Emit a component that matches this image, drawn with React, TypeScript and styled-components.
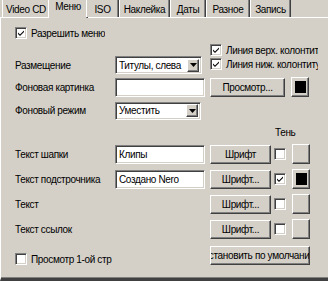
import React from 'react';
import styled, { createGlobalStyle } from 'styled-components';

const face = '#d4d0c8';
const shadow = '#808080';
const dark = '#404040';

const GlobalStyle = createGlobalStyle`
  body {
    margin: 0;
    background: ${face};
  }
`;

const Dialog = styled.div`
  width: 328px;
  height: 281px;
  background: ${face};
  overflow: hidden;
  display: flex;
  flex-direction: column;
  font-family: 'Liberation Sans', Arial, sans-serif;
  font-size: 10px;
  letter-spacing: -0.35px;
  color: #000;
`;

const TabStrip = styled.div`
  display: flex;
  height: 17px;
  padding-left: 2px;
  position: relative;
  z-index: 1;
`;

const Tab = styled.div<{ $w: number; $active?: boolean }>`
  box-sizing: border-box;
  width: ${p => p.$w}px;
  height: ${p => (p.$active ? 18 : 17)}px;
  margin: 0 ${p => (p.$active ? -2 : 0)}px;
  padding-top: ${p => (p.$active ? 1 : 4)}px;
  background: ${face};
  border-left: 1px solid #fff;
  border-right: 1px solid ${dark};
  box-shadow: inset -1px 0 ${shadow};
  text-align: center;
  white-space: nowrap;
  overflow: hidden;
  line-height: 12px;
`;

const Panel = styled.div`
  flex: 1;
  border-top: 1px solid #fff;
  border-left: 1px solid #fff;
  border-bottom: 3px solid ${dark};
  box-shadow: inset 0 -1px ${shadow};
  padding-left: 14px;
  display: flex;
  flex-direction: column;
`;

const Row = styled.div<{ $top: number; $h: number; $align?: string }>`
  display: flex;
  align-items: ${p => p.$align || 'center'};
  margin-top: ${p => p.$top}px;
  height: ${p => p.$h}px;
  flex-shrink: 0;
`;

const Label = styled.div`
  width: 100px;
  flex-shrink: 0;
  white-space: nowrap;
  line-height: 17px;
`;

const Sunken = styled.div`
  box-sizing: border-box;
  background: #fff;
  border-top: 1px solid ${shadow};
  border-left: 1px solid ${shadow};
  border-right: 1px solid #fff;
  border-bottom: 1px solid #fff;
  box-shadow: inset 1px 1px ${dark}, inset -1px -1px ${face};
`;

const TextBox = styled(Sunken)<{ $w: number }>`
  width: ${p => p.$w}px;
  height: 19px;
  padding: 2px 3px;
  line-height: 13px;
  white-space: nowrap;
  overflow: hidden;
`;

const Select = styled(Sunken)<{ $w: number }>`
  width: ${p => p.$w}px;
  height: 18px;
  display: flex;
  align-items: center;
  padding: 2px 2px 2px 3px;
  white-space: nowrap;
`;

const SelectText = styled.span`
  flex: 1;
  overflow: hidden;
`;

const Raised = styled.div`
  box-sizing: border-box;
  background: ${face};
  border-top: 1px solid #fff;
  border-left: 1px solid #fff;
  border-right: 1px solid ${dark};
  border-bottom: 1px solid ${dark};
  box-shadow: inset -1px -1px ${shadow};
`;

const DropButton = styled(Raised)`
  width: 12px;
  height: 13px;
  display: flex;
  align-items: center;
  justify-content: center;
`;

const Button = styled(Raised)<{ $w: number; $left: number }>`
  width: ${p => p.$w}px;
  height: 19px;
  margin-left: ${p => p.$left}px;
  flex-shrink: 0;
  display: flex;
  align-items: center;
  justify-content: center;
  white-space: nowrap;
  overflow: hidden;
`;

const Swatch = styled(Raised)<{ $fill?: string }>`
  width: 18px;
  height: 20px;
  margin-left: 6px;
  flex-shrink: 0;
  display: flex;
  align-items: center;
  justify-content: center;
  &::after {
    content: '';
    width: 11px;
    height: 12px;
    background: ${p => p.$fill || 'transparent'};
  }
`;

const Box = styled(Sunken)<{ $left?: number }>`
  width: 12px;
  height: 12px;
  flex-shrink: 0;
  margin-left: ${p => p.$left || 0}px;
  display: flex;
  align-items: center;
  justify-content: center;
`;

const CheckItem = styled.div<{ $w?: number }>`
  display: flex;
  align-items: center;
  gap: 4px;
  white-space: nowrap;
  overflow: hidden;
  width: ${p => (p.$w ? `${p.$w}px` : 'auto')};
`;

const CheckColumn = styled.div`
  display: flex;
  flex-direction: column;
  align-self: flex-start;
  gap: 2px;
  margin-left: 8px;
`;

const ShadowHead = styled.div`
  margin-top: 7px;
  height: 12px;
  padding-left: 260px;
  line-height: 12px;
`;

const Spacer = styled.div<{ $w: number }>`
  width: ${p => p.$w}px;
  flex-shrink: 0;
`;

const Tick = () => (
  <svg width="8" height="8" viewBox="0 0 8 8">
    <path d="M1 3.5 L3 5.5 L7 1.5 L7 3 L3 7 L1 5 Z" fill="#000" />
  </svg>
);

const Arrow = () => (
  <svg width="7" height="4" viewBox="0 0 7 4">
    <path d="M0 0 H7 L3.5 4 Z" fill="#000" />
  </svg>
);

const Check: React.FC<{ on?: boolean; left?: number }> = ({ on, left }) => (
  <Box $left={left}>{on && <Tick />}</Box>
);

const tabs = [
  { name: 'Video CD', w: 48 },
  { name: 'Меню', w: 40, active: true },
  { name: 'ISO', w: 33 },
  { name: 'Наклейка', w: 51 },
  { name: 'Даты', w: 36 },
  { name: 'Разное', w: 44 },
  { name: 'Запись', w: 41 },
];

const fontRows = [
  { label: 'Текст шапки', value: 'Клипы', button: 'Шрифт', shadow: false, fill: '' },
  { label: 'Текст подстрочника', value: 'Создано Nero', button: 'Шрифт...', shadow: true, fill: '#000' },
  { label: 'Текст', value: null, button: 'Шрифт...', shadow: false, fill: '' },
  { label: 'Текст ссылок', value: null, button: 'Шрифт...', shadow: false, fill: '' },
];

export default function App() {
  return (
    <Dialog>
      <GlobalStyle />
      <TabStrip>
        {tabs.map(t => (
          <Tab key={t.name} $w={t.w} $active={t.active}>
            {t.name}
          </Tab>
        ))}
      </TabStrip>
      <Panel>
        <Row $top={9} $h={12}>
          <CheckItem>
            <Check on />
            <span>Разрешить меню</span>
          </CheckItem>
        </Row>

        <Row $top={5} $h={30} $align="flex-end">
          <Label>Размещение</Label>
          <Select $w={87}>
            <SelectText>Титулы, слева</SelectText>
            <DropButton>
              <Arrow />
            </DropButton>
          </Select>
          <CheckColumn>
            <CheckItem $w={108}>
              <Check on />
              <span>Линия верх. колонтитула</span>
            </CheckItem>
            <CheckItem $w={108}>
              <Check on />
              <span>Линия ниж. колонтитула</span>
            </CheckItem>
          </CheckColumn>
        </Row>

        <Row $top={3} $h={20}>
          <Label>Фоновая картинка</Label>
          <TextBox $w={90} />
          <Button $w={75} $left={5}>Просмотр...</Button>
          <Swatch $fill="#000" />
        </Row>

        <Row $top={4} $h={19}>
          <Label>Фоновый режим</Label>
          <Select $w={86}>
            <SelectText>Уместить</SelectText>
            <DropButton>
              <Arrow />
            </DropButton>
          </Select>
        </Row>

        <ShadowHead>Тень</ShadowHead>

        {fontRows.map(r => (
          <Row key={r.label} $top={5} $h={20}>
            <Label>{r.label}</Label>
            {r.value !== null ? <TextBox $w={90}>{r.value}</TextBox> : <Spacer $w={90} />}
            <Button $w={61} $left={5}>{r.button}</Button>
            <Check on={r.shadow} left={3} />
            <Swatch $fill={r.fill || undefined} />
          </Row>
        ))}

        <Row $top={7} $h={19} $align="flex-end">
          <CheckItem $w={195}>
            <Check />
            <span>Просмотр 1-ой стр</span>
          </CheckItem>
          <Button $w={100} $left={0}>Установить по умолчанию</Button>
        </Row>
      </Panel>
    </Dialog>
  );
}
